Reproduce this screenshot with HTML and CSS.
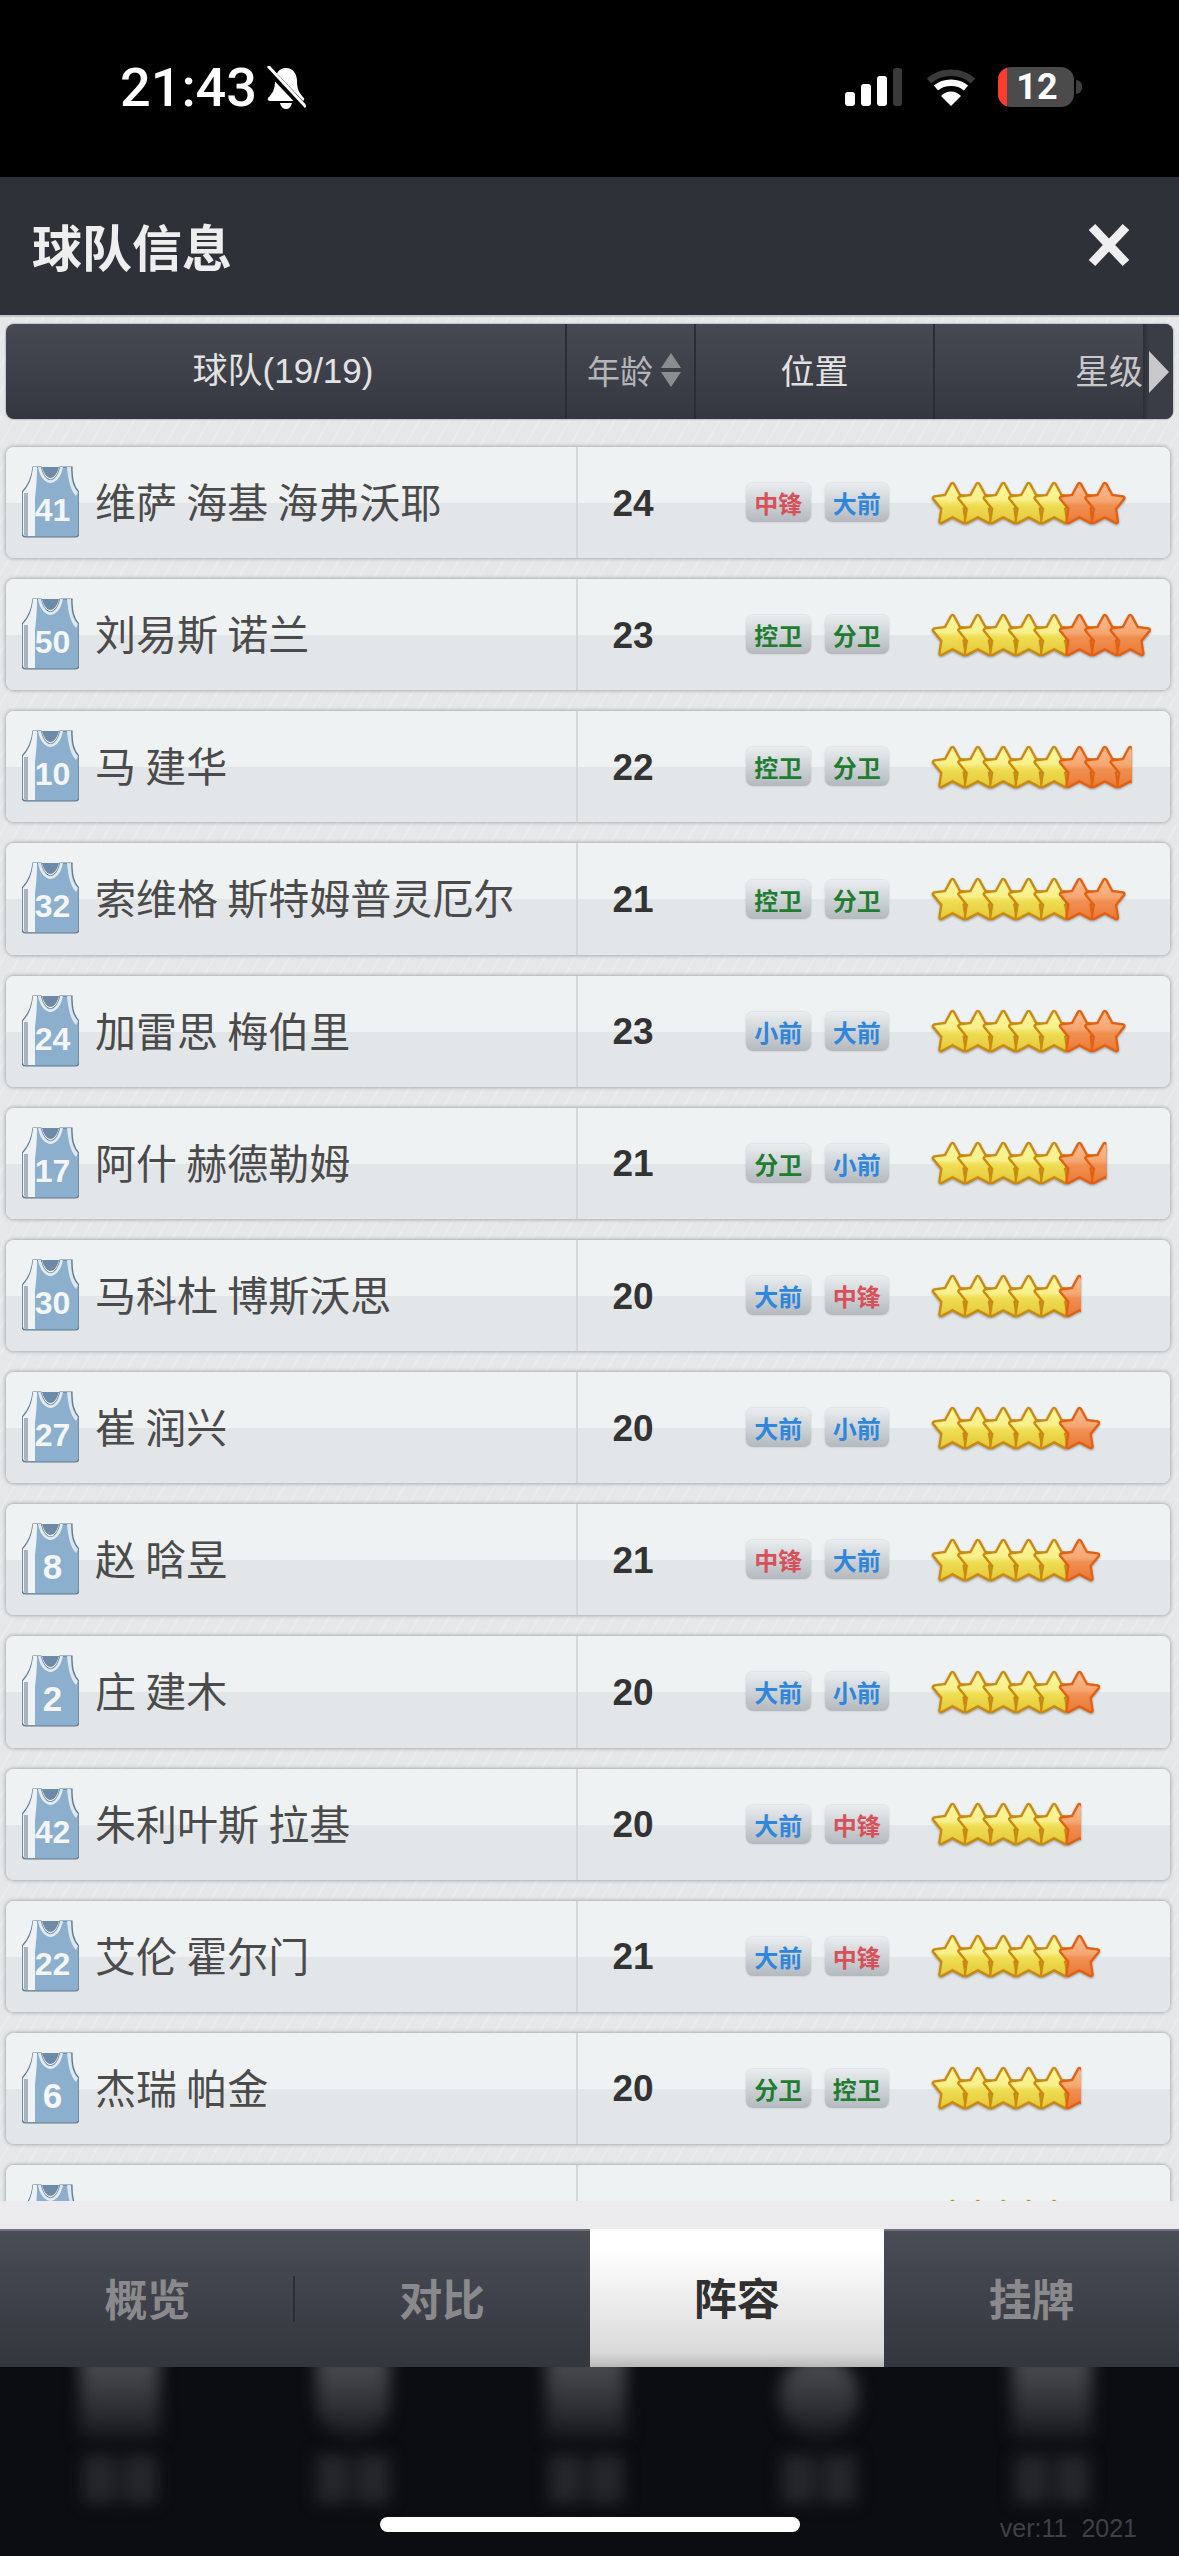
FILE: index.html
```html
<!DOCTYPE html>
<html lang="zh">
<head>
<meta charset="utf-8">
<title>球队信息</title>
<link rel="stylesheet" href="styles.css">
</head>
<body>
<svg class="defs" width="0" height="0" aria-hidden="true">
  <defs>
    <linearGradient id="gy" x1="0" y1="0" x2="0" y2="1">
      <stop offset="0" stop-color="#fbf6a2"/><stop offset=".42" stop-color="#f8f08a"/><stop offset=".56" stop-color="#eedd52"/><stop offset="1" stop-color="#e6c93c"/>
    </linearGradient>
    <linearGradient id="go" x1="0" y1="0" x2="0" y2="1">
      <stop offset="0" stop-color="#f9bb90"/><stop offset=".45" stop-color="#f5a671"/><stop offset=".56" stop-color="#f08f52"/><stop offset="1" stop-color="#ec7c38"/>
    </linearGradient>
    <path id="sp" d="M21.5 4.5 28 16.5 39.5 18 31 28.5 33 41.5 21.5 35.5 10 41.5 12 28.5 3.5 18 15 16.5Z" stroke-linejoin="round"/>
    <g id="y">
      <use href="#sp" fill="#c98a0e" stroke="#c98a0e" stroke-width="5.4"/>
      <use href="#sp" fill="url(#gy)" stroke="url(#gy)" stroke-width=".8"/>
    </g>
    <g id="o">
      <use href="#sp" fill="#e2600f" stroke="#e2600f" stroke-width="5.4"/>
      <use href="#sp" fill="url(#go)" stroke="url(#go)" stroke-width=".8"/>
    </g>
    <clipPath id="half"><rect x="0" y="0" width="23" height="46"/></clipPath>
    <g id="oh" clip-path="url(#half)"><use href="#o"/></g>
    <g id="y5">
      <use href="#y"/><use href="#y" x="25.4"/><use href="#y" x="50.8"/><use href="#y" x="76.2"/><use href="#y" x="101.6"/>
    </g>
    <g id="jersey">
      <path d="M11 1H19C21 10 25 14 28.5 14S36 10 38 1H50C50 12 51 20 57 26V67Q57 71 53 71H4Q0 71 0 67V26C6 20 10 12 11 1Z" fill="#8bafcd" stroke="#60798e" stroke-width="1.2"/>
      <path d="M19 1C21 10 25 14 28.5 14S36 10 38 1L41 1C39 12 33 17 28.5 17S18 12 16 1Z" fill="#fff" opacity=".75"/>
      <path d="M20 1H37C35 8 32 12 28.5 12S22 8 20 1Z" fill="#6d8ba6"/>
      <path d="M11 1H15C15 14 14 24 13 32V70H4Q1 70 1 67V26C7 20 10 12 11 1Z" fill="#eef2f5"/>
      <path d="M2 27H6V70H4Q2 70 2 68Z" fill="#a9b4bc"/>
      <path d="M45 1H49C49 12 50 20 56 26L54 30C48 24 46 12 45 1Z" fill="#fff" opacity=".7"/>
    </g>
  </defs>
</svg>

<header class="status">
  <span class="time">21:43</span>
  <svg class="bell" viewBox="0 0 40 43"><path d="M20 2C27 2 31 8 31 15C31 23 33 27 38 32Q39 35 36 35H4Q1 35 2 32C7 27 9 23 9 15C9 8 13 2 20 2Z" fill="#fff"/><path d="M14 37H26C25 41 23 43 20 43S15 41 14 37Z" fill="#fff"/><path d="M0 1 39 42" stroke="#000" stroke-width="7"/><path d="M2 0 40 41" stroke="#fff" stroke-width="3"/></svg>
  <div class="status-right">
    <svg class="signal" viewBox="0 0 57 38"><rect x="0" y="24" width="10" height="14" rx="3" fill="#fff"/><rect x="16" y="16" width="10" height="22" rx="3" fill="#fff"/><rect x="32" y="8" width="10" height="30" rx="3" fill="#fff"/><rect x="48" y="0" width="9" height="38" rx="3" fill="#3a3a3a"/></svg>
    <svg class="wifi" viewBox="0 0 50 38"><path d="M3 13C15 2 35 2 47 13" fill="none" stroke="#3a3a3a" stroke-width="6.5"/><path d="M10 20C18 13 32 13 40 20" fill="none" stroke="#fff" stroke-width="6.5"/><path d="M25 38 15 28C20 22 30 22 35 28Z" fill="#fff"/></svg>
    <div class="battery"><span class="battery-level"></span><span class="battery-num">12</span></div>
    <span class="battery-nub"></span>
  </div>
</header>

<section class="titlebar">
  <h1 class="title">球队信息</h1>
  <svg class="close" viewBox="0 0 44 44"><path d="M5 4 39 40M39 4 5 40" stroke="#efefef" stroke-width="9" fill="none"/></svg>
</section>

<main class="content">
  <div class="thead">
    <div class="th th-team">球队(19/19)</div>
    <div class="th th-age">年龄<span class="sort"><i class="up"></i><i class="down"></i></span></div>
    <div class="th th-pos">位置</div>
    <div class="th th-star">星级</div>
    <div class="th-more"><i class="more-arrow"></i></div>
  </div>

  <div class="list">
    <article class="row">
      <div class="cell-name"><span class="jersey"><svg viewBox="0 0 57 72"><use href="#jersey"/></svg><b>41</b></span><span class="name">维萨 海基 海弗沃耶</span></div>
      <div class="age">24</div>
      <div class="tags"><span class="tag red">中锋</span><span class="tag blue">大前</span></div>
      <svg class="stars" viewBox="0 0 220 46"><use href="#y5"/><use href="#o" x="127"/><use href="#o" x="152.4"/></svg>
    </article>
    <article class="row">
      <div class="cell-name"><span class="jersey"><svg viewBox="0 0 57 72"><use href="#jersey"/></svg><b>50</b></span><span class="name">刘易斯 诺兰</span></div>
      <div class="age">23</div>
      <div class="tags"><span class="tag green">控卫</span><span class="tag green">分卫</span></div>
      <svg class="stars" viewBox="0 0 220 46"><use href="#y5"/><use href="#o" x="127"/><use href="#o" x="152.4"/><use href="#o" x="177.8"/></svg>
    </article>
    <article class="row">
      <div class="cell-name"><span class="jersey"><svg viewBox="0 0 57 72"><use href="#jersey"/></svg><b>10</b></span><span class="name">马 建华</span></div>
      <div class="age">22</div>
      <div class="tags"><span class="tag green">控卫</span><span class="tag green">分卫</span></div>
      <svg class="stars" viewBox="0 0 220 46"><use href="#y5"/><use href="#o" x="127"/><use href="#o" x="152.4"/><use href="#oh" x="177.8"/></svg>
    </article>
    <article class="row">
      <div class="cell-name"><span class="jersey"><svg viewBox="0 0 57 72"><use href="#jersey"/></svg><b>32</b></span><span class="name">索维格 斯特姆普灵厄尔</span></div>
      <div class="age">21</div>
      <div class="tags"><span class="tag green">控卫</span><span class="tag green">分卫</span></div>
      <svg class="stars" viewBox="0 0 220 46"><use href="#y5"/><use href="#o" x="127"/><use href="#o" x="152.4"/></svg>
    </article>
    <article class="row">
      <div class="cell-name"><span class="jersey"><svg viewBox="0 0 57 72"><use href="#jersey"/></svg><b>24</b></span><span class="name">加雷思 梅伯里</span></div>
      <div class="age">23</div>
      <div class="tags"><span class="tag blue">小前</span><span class="tag blue">大前</span></div>
      <svg class="stars" viewBox="0 0 220 46"><use href="#y5"/><use href="#o" x="127"/><use href="#o" x="152.4"/></svg>
    </article>
    <article class="row">
      <div class="cell-name"><span class="jersey"><svg viewBox="0 0 57 72"><use href="#jersey"/></svg><b>17</b></span><span class="name">阿什 赫德勒姆</span></div>
      <div class="age">21</div>
      <div class="tags"><span class="tag green">分卫</span><span class="tag blue">小前</span></div>
      <svg class="stars" viewBox="0 0 220 46"><use href="#y5"/><use href="#o" x="127"/><use href="#oh" x="152.4"/></svg>
    </article>
    <article class="row">
      <div class="cell-name"><span class="jersey"><svg viewBox="0 0 57 72"><use href="#jersey"/></svg><b>30</b></span><span class="name">马科杜 博斯沃思</span></div>
      <div class="age">20</div>
      <div class="tags"><span class="tag blue">大前</span><span class="tag red">中锋</span></div>
      <svg class="stars" viewBox="0 0 220 46"><use href="#y5"/><use href="#oh" x="127"/></svg>
    </article>
    <article class="row">
      <div class="cell-name"><span class="jersey"><svg viewBox="0 0 57 72"><use href="#jersey"/></svg><b>27</b></span><span class="name">崔 润兴</span></div>
      <div class="age">20</div>
      <div class="tags"><span class="tag blue">大前</span><span class="tag blue">小前</span></div>
      <svg class="stars" viewBox="0 0 220 46"><use href="#y5"/><use href="#o" x="127"/></svg>
    </article>
    <article class="row">
      <div class="cell-name"><span class="jersey"><svg viewBox="0 0 57 72"><use href="#jersey"/></svg><b class="one">8</b></span><span class="name">赵 晗昱</span></div>
      <div class="age">21</div>
      <div class="tags"><span class="tag red">中锋</span><span class="tag blue">大前</span></div>
      <svg class="stars" viewBox="0 0 220 46"><use href="#y5"/><use href="#o" x="127"/></svg>
    </article>
    <article class="row">
      <div class="cell-name"><span class="jersey"><svg viewBox="0 0 57 72"><use href="#jersey"/></svg><b class="one">2</b></span><span class="name">庄 建木</span></div>
      <div class="age">20</div>
      <div class="tags"><span class="tag blue">大前</span><span class="tag blue">小前</span></div>
      <svg class="stars" viewBox="0 0 220 46"><use href="#y5"/><use href="#o" x="127"/></svg>
    </article>
    <article class="row">
      <div class="cell-name"><span class="jersey"><svg viewBox="0 0 57 72"><use href="#jersey"/></svg><b>42</b></span><span class="name">朱利叶斯 拉基</span></div>
      <div class="age">20</div>
      <div class="tags"><span class="tag blue">大前</span><span class="tag red">中锋</span></div>
      <svg class="stars" viewBox="0 0 220 46"><use href="#y5"/><use href="#oh" x="127"/></svg>
    </article>
    <article class="row">
      <div class="cell-name"><span class="jersey"><svg viewBox="0 0 57 72"><use href="#jersey"/></svg><b>22</b></span><span class="name">艾伦 霍尔门</span></div>
      <div class="age">21</div>
      <div class="tags"><span class="tag blue">大前</span><span class="tag red">中锋</span></div>
      <svg class="stars" viewBox="0 0 220 46"><use href="#y5"/><use href="#o" x="127"/></svg>
    </article>
    <article class="row">
      <div class="cell-name"><span class="jersey"><svg viewBox="0 0 57 72"><use href="#jersey"/></svg><b class="one">6</b></span><span class="name">杰瑞 帕金</span></div>
      <div class="age">20</div>
      <div class="tags"><span class="tag green">分卫</span><span class="tag green">控卫</span></div>
      <svg class="stars" viewBox="0 0 220 46"><use href="#y5"/><use href="#oh" x="127"/></svg>
    </article>
    <article class="row">
      <div class="cell-name"><span class="jersey"><svg viewBox="0 0 57 72"><use href="#jersey"/></svg></span></div>
      <div class="age"></div>
      <div class="tags"></div>
      <svg class="stars" viewBox="0 0 220 46"><use href="#y5"/></svg>
    </article>
  </div>
  <div class="list-foot"></div>
</main>

<nav class="tabs">
  <div class="tab tab-first">概览</div>
  <div class="tab">对比</div>
  <div class="tab active">阵容</div>
  <div class="tab">挂牌</div>
</nav>

<footer class="ghost">
  <div class="ghost-col"><i class="g-icon"></i><i class="g-label"></i></div>
  <div class="ghost-col"><i class="g-icon g-v"></i><i class="g-label"></i></div>
  <div class="ghost-col"><i class="g-icon"></i><i class="g-label"></i></div>
  <div class="ghost-col"><i class="g-icon g-o"></i><i class="g-label"></i></div>
  <div class="ghost-col"><i class="g-icon"></i><i class="g-label"></i></div>
  <span class="ver">ver:11&nbsp;&nbsp;2021</span>
  <span class="home"></span>
</footer>
</body>
</html>
```

FILE: styles.css
```css
* { box-sizing: border-box; }
html, body { margin: 0; padding: 0; }
body {
  width: 1179px;
  height: 2556px;
  overflow: hidden;
  background: #000;
  font-family: "Liberation Sans", "Noto Sans CJK SC", sans-serif;
  display: flex;
  flex-direction: column;
}
.defs { position: absolute; }

/* status bar */
.status {
  height: 177px;
  flex: none;
  background: #000;
  display: flex;
  align-items: flex-start;
  padding: 56px 97px 0 120px;
  color: #fff;
}
.time {
  font-family: Roboto, "Liberation Sans", sans-serif;
  font-size: 54px;
  font-weight: 500;
  line-height: 64px;
}
.bell { width: 40px; height: 43px; margin: 10px 0 0 9px; }
.status-right { margin-left: auto; display: flex; align-items: flex-start; }
.signal { width: 57px; height: 38px; margin-top: 12px; }
.wifi { width: 50px; height: 38px; margin: 12px 0 0 24px; }
.battery {
  width: 76px;
  height: 40px;
  margin: 11px 0 0 22px;
  border-radius: 13px;
  background: #4b4b4b;
  overflow: hidden;
  display: flex;
}
.battery-level { width: 9px; background: #ff3b30; }
.battery-num {
  flex: 1;
  text-align: center;
  font-family: Roboto, "Liberation Sans", sans-serif;
  font-size: 36px;
  font-weight: 700;
  line-height: 40px;
  padding-right: 7px;
}
.battery-nub {
  width: 6px;
  height: 14px;
  margin: 24px 0 0 2px;
  border-radius: 0 7px 7px 0;
  background: #3f3f3f;
}

/* title bar */
.titlebar {
  height: 140px;
  flex: none;
  background: #2f3138;
  border-bottom: 2px solid #c4c5c7;
  display: flex;
  align-items: center;
  justify-content: space-between;
  padding: 0 48px 2px 32px;
}
.title {
  margin: 0;
  font-size: 50px;
  font-weight: 700;
  color: #eeeeee;
  font-family: "Noto Sans CJK SC", sans-serif;
}
.close { width: 44px; height: 44px; }

/* content */
.content {
  height: 1912px;
  flex: none;
  background-color: #e6e7e9;
  background-image: repeating-linear-gradient(120deg, rgba(255,255,255,0) 0 11px, rgba(255,255,255,.18) 11px 13px);
  padding-top: 7px;
  display: flex;
  flex-direction: column;
}
.thead {
  height: 95px;
  flex: none;
  margin: 0 6px;
  border-radius: 8px;
  background: linear-gradient(#474a53, #34373f);
  box-shadow: 0 0 2px rgba(0,0,0,.5);
  display: flex;
  overflow: hidden;
  font-family: "Noto Sans CJK SC", sans-serif;
  color: #e2e2e2;
  font-size: 34px;
  line-height: 1;
}
.th {
  display: flex;
  align-items: center;
  justify-content: center;
  border-right: 2px solid #2b2d33;
  padding-bottom: 3px;
}
.th-team { width: 561px; font-family: "Liberation Sans", "Noto Sans CJK SC", sans-serif; font-size: 35px; padding-right: 5px; }
.th-age { width: 129px; color: #b4b5b8; font-size: 33px; gap: 8px; justify-content: flex-start; padding-left: 20px; }
.th-pos { width: 239px; }
.th-star { flex: 1; border: 0; justify-content: flex-end; color: #c8c8ca; }
.sort { display: flex; flex-direction: column; gap: 4px; }
.sort i { display: block; width: 0; height: 0; border-left: 10px solid transparent; border-right: 10px solid transparent; }
.sort .up { border-bottom: 15px solid #8c8d91; }
.sort .down { border-top: 15px solid #8c8d91; }
.th-more {
  width: 30px;
  flex: none;
  display: flex;
  align-items: center;
  justify-content: flex-end;
  padding-right: 4px;
  background: linear-gradient(90deg, #2c2e34 0, #3a3d45 6px);
}
.more-arrow {
  display: block;
  width: 0;
  height: 0;
  border-top: 21px solid transparent;
  border-bottom: 21px solid transparent;
  border-left: 20px solid #c9c9cb;
}

.list {
  flex: 1;
  min-height: 0;
  overflow: hidden;
  padding: 28px 9px 0 6px;
  display: flex;
  flex-direction: column;
  gap: 21px;
}
.row {
  height: 111.17px;
  flex: none;
  border-radius: 8px;
  background: linear-gradient(#eef2f3 0 56px, #e3e6e8 56px 100%);
  box-shadow: 0 0 4px rgba(0,0,0,.38);
  display: flex;
  align-items: center;
}
.cell-name {
  width: 572px;
  height: 100%;
  flex: none;
  display: flex;
  align-items: flex-start;
  padding: 19px 0 0 16px;
  gap: 16px;
  border-right: 2px solid #d5d7d9;
}
.jersey { position: relative; width: 57px; height: 72px; flex: none; display: block; }
.jersey svg { width: 57px; height: 72px; display: block; }
.jersey b {
  position: absolute;
  left: 4px;
  right: 0;
  top: 26px;
  text-align: center;
  color: #f4f6f8;
  font-size: 32px;
  line-height: 36px;
  font-weight: 700;
}
.jersey b.one { font-size: 35px; }
.name {
  font-family: "Noto Sans CJK SC", sans-serif;
  font-size: 41px;
  line-height: 68px;
  color: #4b4b4b;
  white-space: nowrap;
}
.age {
  width: 110px;
  flex: none;
  text-align: center;
  font-size: 37px;
  font-weight: 700;
  color: #333;
  padding-top: 2px;
}
.tags { width: 143px; flex: none; margin-left: 58px; display: flex; gap: 14px; }
.tag {
  width: 64.5px;
  height: 39px;
  border-radius: 7px;
  background: linear-gradient(#e9edef, #b3b9be);
  box-shadow: 0 0 2px rgba(0,0,0,.2);
  font-family: "Noto Sans CJK SC", sans-serif;
  font-size: 24px;
  font-weight: 700;
  line-height: 39px;
  text-align: center;
}
.red { color: #d8505a; }
.blue { color: #2f86dc; }
.green { color: #1f7c30; }
.stars {
  width: 220px;
  height: 46px;
  flex: none;
  margin-left: 42px;
  filter: drop-shadow(0 1px 1px rgba(0,0,0,.35));
}
.list-foot { height: 28px; flex: none; background: rgba(236,236,238,.9); }

/* tabs */
.tabs {
  height: 138px;
  flex: none;
  display: flex;
  background: linear-gradient(#4a4d56, #33363d);
  border-top: 2px solid #70737a;
}
.tab {
  flex: 1;
  display: flex;
  align-items: center;
  justify-content: center;
  padding-bottom: 5px;
  font-family: "Noto Sans CJK SC", sans-serif;
  font-size: 43px;
  font-weight: 700;
  color: #8a8a8c;
  position: relative;
}
.tab-first::after {
  content: "";
  position: absolute;
  right: 0;
  top: 45px;
  height: 46px;
  border-right: 2px solid #2c2e33;
}
.active { background: linear-gradient(#ffffff 15%, #d9d9d9 90%, #b8b8b8); color: #303030; margin-top: -2px; }

/* blurred layer below the app */
.ghost {
  flex: 1;
  position: relative;
  overflow: hidden;
  background: #0c0d10;
  display: grid;
  grid-template-columns: repeat(5, 233px);
  padding-left: 3px;
}
.ghost-col { display: flex; flex-direction: column; align-items: center; }
.ghost i { display: block; filter: blur(8px); }
.g-icon {
  width: 80px;
  height: 84px;
  margin-top: -12px;
  background: linear-gradient(#4f5053, #333437 55%, #17181b);
}
.g-v { width: 74px; border-radius: 10px 10px 44px 44px; }
.g-o { border-radius: 50%; }
.g-label {
  width: 74px;
  height: 48px;
  margin-top: 16px;
  background: linear-gradient(90deg, #26272a 0 44%, #101114 44% 56%, #26272a 56%);
}
.ver {
  position: absolute;
  right: 42px;
  bottom: 15px;
  font-size: 25px;
  line-height: 26px;
  color: #3f4045;
}
.home {
  position: absolute;
  left: 380px;
  top: 150px;
  width: 420px;
  height: 15px;
  border-radius: 8px;
  background: #fff;
}
```
